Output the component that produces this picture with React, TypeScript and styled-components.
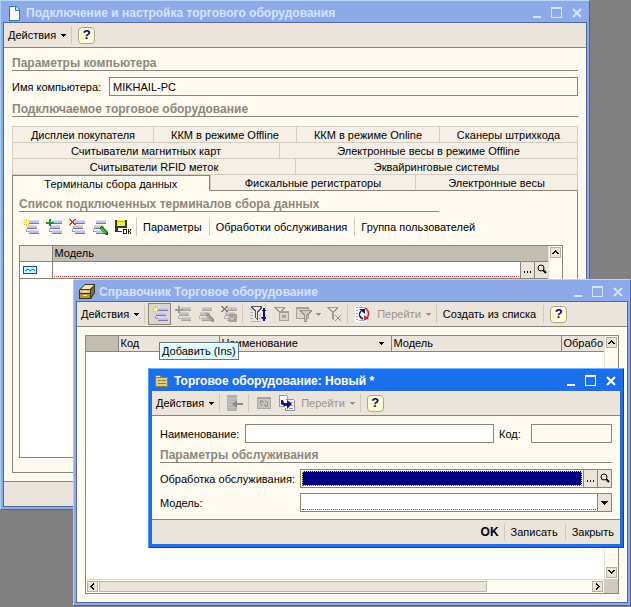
import React, { useState } from "react";
import styled, { createGlobalStyle, css } from "styled-components";

const c = {
  face: "#ebe4da",
  cream: "#fffbf0",
  line: "#8a8577",
  head: "#c3bcb0",
  soft: "#d3cdc0",
  caption: "#8c887b",
  disabled: "#99958b",
};

const GlobalStyle = createGlobalStyle`
  *, *::before, *::after { box-sizing: border-box; }
  body {
    margin: 0;
    background: #808080;
    color: #000;
    font: 11px/14px "Liberation Sans", Arial, sans-serif;
  }
  button, input, select { font: inherit; color: inherit; margin: 0; border-radius: 0; }
`;

const Desktop = styled.main`
  position: relative;
  min-height: 100vh;
  overflow: hidden;
`;

/* ---------- window frame ---------- */

const Frame = styled.section<{ $active?: boolean; $inset: string }>`
  position: absolute;
  inset: ${(p) => p.$inset};
  display: flex;
  flex-direction: column;
  padding: 0 2px 2px 2px;
  background: ${(p) => (p.$active ? "#1c6fec" : "#8faae9")};
  border: 1px solid ${(p) => (p.$active ? "#0a3fc0" : "#4a63a8")};
  border-top-color: ${(p) => (p.$active ? "#6fb4ff" : "#b4d8fa")};
  border-left-color: ${(p) => (p.$active ? "#4c9bff" : "#a5d0f5")};
`;

const TitleBar = styled.header<{ $active?: boolean }>`
  display: flex;
  align-items: center;
  flex: none;
  height: 21px;
  padding: 2px 2px 0 3px;
  gap: 4px;
  color: ${(p) => (p.$active ? "#fff" : "#d3e3ff")};

  h1 {
    flex: 1;
    margin: 0;
    font-size: 12px;
    line-height: 14px;
    font-weight: bold;
    white-space: nowrap;
    overflow: hidden;
  }
`;

const WindowButton = styled.button`
  flex: none;
  width: 16px;
  height: 16px;
  padding: 0;
  border: 0;
  background: none;
  color: inherit;
  display: grid;
  place-items: center;
`;

const Client = styled.div<{ $active?: boolean }>`
  flex: 1;
  min-height: 0;
  display: flex;
  flex-direction: column;
  border: 1px solid ${(p) => (p.$active ? "#2f68d0" : "#53679c")};
  background: ${c.cream};
`;

const Toolbar = styled.div<{ $plain?: boolean }>`
  display: flex;
  align-items: center;
  flex: none;
  height: ${(p) => (p.$plain ? "26px" : "25px")};
  padding: 0 1px;
  ${(p) =>
    !p.$plain &&
    css`
      background: ${c.face};
      border-bottom: 1px solid ${c.line};
    `}
`;

const ListTools = styled(Toolbar)`
  padding: 0;
  margin: 2px 0 5px;
`;

const Separator = styled.span`
  flex: none;
  width: 1px;
  height: 18px;
  margin: 0 3px 0 2px;
  background: #cfc9bc;
`;

const TextButton = styled.button<{ $strong?: boolean; $loose?: boolean }>`
  flex: none;
  display: flex;
  align-items: center;
  gap: 5px;
  padding: 0 ${(p) => (p.$loose ? "5px" : "3px")} 0 3px;
  border: 0;
  background: none;
  white-space: nowrap;
  ${(p) => p.$strong && css`font-size: 12px; font-weight: bold;`}

  &:disabled { color: ${c.disabled}; }
`;

const IconButton = styled.button<{ $hot?: boolean; $narrow?: boolean }>`
  flex: none;
  display: grid;
  place-items: center;
  width: ${(p) => (p.$narrow ? "7px" : "23px")};
  height: 22px;
  padding: 0;
  border: 1px solid ${(p) => (p.$hot ? "#8a8577" : "transparent")};
  background: ${(p) => (p.$hot ? "#dcd6cc" : "none")};

  &:disabled { color: ${c.disabled}; }
`;

const Help = styled.button`
  flex: none;
  width: 17px;
  height: 17px;
  margin-left: 3px;
  padding: 0;
  border: 1px solid #a9a695;
  border-radius: 4px;
  background: #ffffd2;
  color: #000080;
  font-weight: bold;
  font-size: 13px;
  line-height: 14px;
`;

const Body = styled.div`
  flex: 1;
  min-height: 0;
  display: flex;
  flex-direction: column;
  padding: 8px;
`;

const Gap = styled.div<{ $small?: boolean }>`
  flex: none;
  height: ${(p) => (p.$small ? "5px" : "6px")};
`;

const Caption = styled.h2<{ $short?: boolean }>`
  flex: none;
  margin: 0;
  margin-right: ${(p) => (p.$short ? "124px" : "0")};
  border-bottom: 1px solid ${c.line};
  color: ${c.caption};
  font-size: 12px;
  line-height: 14px;
  font-weight: bold;
  white-space: nowrap;
`;

const StatusBar = styled.footer`
  display: flex;
  align-items: center;
  justify-content: flex-end;
  flex: none;
  height: 25px;
  padding: 0 3px;
  border-top: 1px solid ${c.line};
  background: ${c.face};
`;

/* ---------- fields ---------- */

const FormRow = styled.div<{ $label: number }>`
  display: grid;
  grid-template-columns: ${(p) => p.$label}px 1fr;
  align-items: center;
  white-space: nowrap;
`;

const NameRow = styled(FormRow)`
  grid-template-columns: ${(p) => p.$label}px 1fr 37px 81px;

  label:nth-of-type(2) { padding-left: 5px; }
`;

const TextInput = styled.input`
  width: 100%;
  min-width: 0;
  height: 19px;
  padding: 0 3px;
  border: 1px solid ${c.line};
  background: #fff;
  outline: none;

  &:read-only { background: ${c.cream}; }
`;

const Box = styled.div`
  display: flex;
  height: 19px;
  border: 1px solid ${c.line};
  background: #fff;
`;

const Required = styled.div`
  flex: 1;
  display: flex;
  min-width: 0;
  margin: 1px;
  border-bottom: 1px dotted #b02a2a;
`;

const BareInput = styled.input<{ $selected?: boolean }>`
  flex: 1;
  min-width: 0;
  padding: 0 2px;
  border: 0;
  outline: none;
  background: none;
  ${(p) =>
    p.$selected &&
    css`
      background: #000080;
      border: 1px dotted #d8d8a0;
      border-bottom: 0;
      color: #fff;
    `}
`;

const BareSelect = styled.select`
  flex: 1;
  min-width: 0;
  border: 0;
  outline: none;
  appearance: none;
  background: none;
`;

const FieldButton = styled.button`
  flex: none;
  display: grid;
  place-items: center;
  width: 14px;
  padding: 0;
  border: 0;
  border-left: 1px solid ${c.line};
  background: ${c.face};
`;

/* ---------- tabs ---------- */

const Tabs = styled.div`
  flex: none;
  margin-top: 9px;
  border-top: 1px solid ${c.soft};
`;

const TabRow = styled.div`
  display: flex;
  height: 16px;
`;

const Tab = styled.button<{ $w: number; $on?: boolean }>`
  flex: ${(p) => p.$w} 1 0;
  min-width: 0;
  padding: 1px 0 0;
  border: solid ${c.soft};
  border-width: 0 0 1px 1px;
  background: #f5efe5;
  line-height: 14px;
  white-space: nowrap;
  overflow: hidden;

  &:last-child { border-right-width: 1px; }

  ${TabRow}:last-child & { border-bottom-color: ${c.line}; }

  ${(p) =>
    p.$on &&
    css`
      ${TabRow}:last-child &&, && {
        padding: 0;
        border-color: ${c.line};
        border-width: 1px 1px 0 1px;
        background: ${c.cream};
      }
    `}
`;

const TabPanel = styled.div`
  flex: 1;
  min-height: 0;
  display: flex;
  flex-direction: column;
  padding: 6px 14px 14px 6px;
  border: 1px solid ${c.line};
  border-top: 0;
`;

/* ---------- tables ---------- */

const GridBox = styled.div`
  flex: 1;
  min-height: 0;
  display: grid;
  grid-template-columns: 1fr 14px;
  grid-template-rows: 1fr auto;
  border: 1px solid ${c.line};
  background: #fff;
`;

const Table = styled.table`
  width: 100%;
  border-collapse: collapse;
  table-layout: fixed;
  align-self: start;

  th, td {
    height: 15px;
    padding: 0 0 0 2px;
    border-right: 1px solid ${c.line};
    border-bottom: 1px solid ${c.line};
    font-weight: normal;
    text-align: left;
    white-space: nowrap;
    overflow: hidden;
  }
  th { background: ${c.face}; line-height: 14px; }
  td { height: 17px; padding: 0; }
  tr > :last-child { border-right: 0; }
`;

const HeadCell = styled.th<{ $dark?: boolean }>`
  ${(p) => p.$dark && css`&& { background: ${c.head}; }`}
`;

const Sorted = styled.span`
  display: flex;
  align-items: center;
  justify-content: space-between;
  padding-right: 7px;
`;

const CellEditor = styled.div`
  display: flex;
  height: 16px;
`;

const RowMark = styled.span`
  display: grid;
  padding-left: 3px;
`;

const VTrack = styled.div`
  display: flex;
  flex-direction: column;
  justify-content: space-between;
  padding: 1px;
  background: ${c.cream};
  border-left: 1px solid #e6e1d6;
`;

const HTrack = styled.div`
  display: flex;
  gap: 1px;
  padding: 1px;
  height: 14px;
  background: ${c.cream};
  border-top: 1px solid #e0dbd0;
`;

const Thumb = styled.span`
  flex: 389 1 0;
  background: ${c.face};
  border: 1px solid #bdb8ab;
`;

const Rest = styled.span`
  flex: 104 1 0;
`;

const Corner = styled.span`
  background: #d0cabf;
`;

const ScrollButton = styled.button`
  flex: none;
  display: grid;
  place-items: center;
  width: 11px;
  height: 11px;
  padding: 0;
  border: 1px solid #b5b0a3;
  background: ${c.face};
`;

const Hint = styled.div`
  position: absolute;
  left: 159px;
  top: 342px;
  padding: 1px 2px;
  border: 1px solid #6c7a7a;
  background: #e1ffff;
  white-space: nowrap;
`;

/* ---------- icons ---------- */

const Svg = ({ w = 16, h = 16, children }: { w?: number; h?: number; children: React.ReactNode }) => (
  <svg width={w} height={h} viewBox={`0 0 ${w} ${h}`} shapeRendering="crispEdges" aria-hidden="true">
    {children}
  </svg>
);

const Down = () => (
  <Svg w={5} h={3}>
    <path d="M0 0h5v1H0zM1 1h3v1H1zM2 2h1v1H2z" fill="currentColor" />
  </Svg>
);

const Chevron = ({ dir }: { dir: "up" | "down" | "left" | "right" }) => {
  const d = {
    up: "M3 1h1v1H3zM2 2h3v1H2zM1 3h2v1H1zM4 3h2v1H4zM0 4h2v1H0zM5 4h2v1H5z",
    down: "M0 1h2v1H0zM5 1h2v1H5zM1 2h2v1H1zM4 2h2v1H4zM2 3h3v1H2zM3 4h1v1H3z",
    left: "M4 0h1v2H4zM3 1h1v2H3zM2 2h1v3H2zM1 3h1v1H1zM3 4h1v2H3zM4 5h1v2H4z",
    right: "M2 0h1v2H2zM3 1h1v2H3zM4 2h1v3H4zM5 3h1v1H5zM3 4h1v2H3zM2 5h1v2H2z",
  }[dir];
  return (
    <Svg w={7} h={7}>
      <path d={d} />
    </Svg>
  );
};

const Bars = ({ off }: { off?: boolean }) => (
  <>
    <path d="M6 1h10v4H6zM4 6h10v4H4zM6 11h10v4H6z" fill={off ? "#c0bcba" : "#bfc1ea"} />
    <path d="M6 1h10v1H6zM4 6h10v1H4zM6 11h10v1H6z" fill={off ? "#cfcbc8" : "#d9daf5"} />
    <path d="M6 4h10v1H6zM4 9h10v1H4zM6 14h10v1H6z" fill={off ? "#a5a2a4" : "#7778b0"} />
    <path d="M3 10h1v3H3zM3 12h3v1H3z" fill={off ? "#b5b1ae" : "#9a9cc8"} />
  </>
);

const AddIcon = () => (
  <Svg>
    <Bars />
    <path d="M3 0h1v7H3zM0 3h7v1H0zM1 1h1v1H1zM5 1h1v1H5zM1 5h1v1H1zM5 5h1v1H5z" fill="#ecc428" />
    <path d="M2 2h3v3H2z" fill="#fff27a" />
  </Svg>
);
const CopyIcon = ({ off }: { off?: boolean }) => (
  <Svg>
    <Bars off={off} />
    <path d="M3 0h2v7H3zM0 3h8v2H0z" fill={off ? "#9a9c94" : "#1c9a1c"} />
  </Svg>
);
const cross =
  "M0 0h2v1H0zM1 1h2v1H1zM2 2h3v2H2zM4 1h2v1H4zM5 0h2v1H5zM1 4h2v1H1zM4 4h2v1H4zM0 5h2v1H0zM5 5h2v1H5z";
const DeleteIcon = () => (
  <Svg>
    <Bars />
    <path d={cross} fill="#d23a20" />
  </Svg>
);
const EditIcon = ({ off }: { off?: boolean }) => (
  <Svg>
    <g transform="translate(-2 0)"><Bars off={off} /></g>
    <path d="M8 7h2l6 6v3h-2L8 10z" fill={off ? "#8f928a" : "#0c5a1c"} shapeRendering="auto" />
    <path d="M9 9l5 5" stroke={off ? "#a3a69c" : "#30d030"} strokeWidth="2" shapeRendering="auto" />
    <path d="M7 6h2v2H7z" fill={off ? "#b5b2aa" : "#f0d890"} />
  </Svg>
);
const MarkIcon = () => (
  <Svg>
    <Bars off />
    <path d={cross} fill="#8b7a6e" />
    <path d="M8 8h8v8H8z" fill="#a6a48c" />
    <path d="M9 11h1v2H9zM10 12h2v2h-2zM12 11h1v2h-1zM13 10h1v1h-1z" fill="#c6c4b0" />
  </Svg>
);
const SaveIcon = () => (
  <Svg>
    <path d="M0 1h12v12H0z" fill="#333a2c" />
    <path d="M2 1h8v6H2z" fill="#f2ee3a" />
    <path d="M2 2h8v1H2z" fill="#c8c020" />
    <path d="M3 9h4v3H3z" fill="#fff" />
    <path d="M7 9h9v7H7z" fill={c.cream} />
    <path d="M8 10h4v1H8zM8 11h1v3H8zM11 11h1v3h-1zM8 14h4v1H8zM13 10h1v5h-1zM15 10h1v2h-1zM14 12h1v1h-1zM15 13h1v2h-1z" fill="#222" />
  </Svg>
);
const SortFilterIcon = () => (
  <Svg>
    <path d="M0 3h2v1H0zM0 6h3v1H0zM0 9h3v1H0zM0 12h3v1H0zM0 15h11v1H0zM9 9h2v1H9zM9 12h2v1H9z" fill="#a8b6d6" />
    <path d="M1 0h11v2L8 6v8l-3-2V6L1 2z" fill="#555" />
    <path d="M3 1h7v1L7 5v7H6V5L3 2z" fill="#e6e6e6" />
    <path d="M13 2h2v9h-2zM12 4h4v1h-4zM11 11h5v1h-5zM12 12h4v1h-4zM13 13h2v2h-2z" fill="#12128a" />
  </Svg>
);
const Funnel = () => (
  <path d="M1 1h11v1l-4 5v8l-2-2V7L1 2zM3 2l4 4 3-4z" fill="#9d9a92" fillRule="evenodd" />
);
const FilterCurrentIcon = () => (
  <Svg>
    <Funnel />
    <path d="M6 5h10v10H6z" fill="#a5a29a" />
    <path d="M7 7h8v7H7z" fill="#d9d4ca" />
    <path d="M9 9h4v3H9z" fill="#aba79e" />
  </Svg>
);
const FilterHistoryIcon = () => (
  <Svg>
    <path d="M0 1h13v12H0z" fill="#a5a29a" />
    <path d="M1 3h11v9H1z" fill="#ddd8ce" />
    <path d="M3 4h13v1l-5 5v6H8v-6L3 5z" fill="#98958c" />
    <path d="M5 5h9l-4 4v6H9V9z" fill="#cfcbc1" />
  </Svg>
);
const FilterOffIcon = () => (
  <Svg>
    <Funnel />
    <path d="M9 9l6 6M15 9l-6 6" stroke="#96938b" fill="none" shapeRendering="auto" />
  </Svg>
);
const RefreshListIcon = () => (
  <Svg>
    <path d="M0 0h11v16H0z" fill="#fff" />
    <path d="M1 1h2v1H1zM1 4h2v1H1zM1 7h2v1H1zM1 10h2v1H1zM1 13h2v1H1zM4 1h6v1H4zM4 14h6v1H4z" fill="#8fa4cc" />
    <path d="M8 13Q2 10 6 5" fill="none" stroke="#15158a" strokeWidth="1.5" shapeRendering="auto" />
    <path d="M4 3h6v5z" fill="#15158a" shapeRendering="auto" />
    <path d="M10 2q6 4 2 10" fill="none" stroke="#c02828" strokeWidth="1.5" shapeRendering="auto" />
    <path d="M9 14V9l5 4z" fill="#c02828" shapeRendering="auto" />
  </Svg>
);
const ParentIcon = () => (
  <Svg>
    <path d="M0 0h10v16H0z" fill="#b5b3b2" />
    <path d="M1 3h8v1H1zM1 6h8v1H1zM1 9h8v1H1zM1 12h8v1H1z" fill="#c8c5c3" />
    <path d="M5 9l5-4v3h6v2h-6v3z" fill="#8c8a88" shapeRendering="auto" />
  </Svg>
);
const ReloadIcon = () => (
  <Svg>
    <path d="M1 2h14v12H1z" fill="#a9a7a2" />
    <path d="M2 4h12v9H2z" fill="#c6c3bd" />
    <path d="M6 11q-3-2-1-5M4 6h3v2M9 6q4 1 2 5M12 11H9V9" fill="none" stroke="#8b8984" shapeRendering="auto" />
  </Svg>
);
const GoIcon = () => (
  <Svg>
    <path d="M0 0h9v12H0zM8 4h8v12H6v-4z" fill="#fff" />
    <path d="M0 0h8v1H0zM0 1h1v10H0zM8 1h1v3H8zM0 11h6v1H0zM7 4h8v1H7zM15 5h1v11h-1zM6 15h9v1H6zM6 13h1v2H6zM10 7h4v1h-4zM12 10h2v1h-2zM10 13h4v1h-4z" fill="#8f97ac" />
    <path d="M2 5h2l1 3h3V5l5 4-5 5v-3H5L2 9z" fill="#14148f" shapeRendering="auto" />
  </Svg>
);
const RecordIcon = () => (
  <Svg w={15} h={10}>
    <path d="M0 1h14v8H0z" fill="#1b4f9e" />
    <path d="M1 2h12v6H1z" fill="#c9f4ff" />
    <path d="M2 6l3-2 2 2 3-2 2 2" fill="none" stroke="#1b6ea8" shapeRendering="auto" />
  </Svg>
);
const DotsIcon = () => (
  <Svg w={9} h={9}>
    <path d="M1 6h1v2H1zM4 6h1v2H4zM7 6h1v2H7z" />
  </Svg>
);
const LensIcon = () => (
  <Svg w={11} h={11}>
    <circle cx="5" cy="4" r="3" fill="none" stroke="#000" shapeRendering="auto" />
    <path d="M7 6l3 3" stroke="#000" strokeWidth="2" shapeRendering="auto" />
  </Svg>
);
const PageIcon = () => (
  <Svg>
    <path d="M3 1h7l4 4v11H3z" fill="#2f7f98" />
    <path d="M4 2h5v4h4v9H4z" fill="#fff" />
    <path d="M10 2l3 3h-3z" fill="#b8e4f4" />
  </Svg>
);
const CabinetIcon = () => (
  <Svg>
    <path d="M0 6l6-6h10v9l-4 6H0z" fill="#3a3424" shapeRendering="auto" />
    <path d="M2 5l4-4h9l-4 4z" fill="#f4e6b0" shapeRendering="auto" />
    <path d="M1 6h10v3H1z" fill="#e0c070" />
    <path d="M1 10h10v4H1z" fill="#b8903c" />
    <path d="M12 6l3-4v7l-3 4z" fill="#8a6a2a" shapeRendering="auto" />
    <path d="M4 7h4v1H4zM4 11h4v1H4z" fill="#fff6d0" />
  </Svg>
);
const FolderIcon = () => (
  <Svg>
    <path d="M1 2h6l1 2h6v10H1z" fill="#8b8438" />
    <path d="M2 5h11v8H2z" fill="#d8cf80" />
    <path d="M2 3h4v1H2z" fill="#f5efb0" />
    <path d="M4 7h3v1H4zM8 7h4v1H8zM4 10h8v1H4z" fill="#8b8438" />
  </Svg>
);

const WindowButtons = () => (
  <>
    <WindowButton aria-label="Свернуть">
      <Svg w={12} h={12}><path d="M2 9h8v2H2z" fill="currentColor" /></Svg>
    </WindowButton>
    <WindowButton aria-label="Развернуть">
      <Svg w={12} h={12}><path d="M0 0h11v11H0zM1 2v8h9V2z" fillRule="evenodd" fill="currentColor" /></Svg>
    </WindowButton>
    <WindowButton aria-label="Закрыть окно">
      <Svg w={12} h={12}><path d="M2 2l8 8M10 2l-8 8" stroke="currentColor" strokeWidth="2" shapeRendering="auto" /></Svg>
    </WindowButton>
  </>
);

const tabRows: [string, number][][] = [
  [["Дисплеи покупателя", 141], ["ККМ в режиме Offline", 143], ["ККМ в режиме Online", 143], ["Сканеры штрихкода", 138]],
  [["Считыватели магнитных карт", 267], ["Электронные весы в режиме Offline", 298]],
  [["Считыватели RFID меток", 283], ["Эквайринговые системы", 282]],
  [["Терминалы сбора данных", 197], ["Фискальные регистраторы", 206], ["Электронные весы", 162]],
];

export default function App() {
  const [tab, setTab] = useState("Терминалы сбора данных");
  return (
    <>
      <GlobalStyle />
      <Desktop>
        <Frame $inset="0 41px 97px 0">
          <TitleBar>
            <PageIcon />
            <h1>Подключение и настройка торгового оборудования</h1>
            <WindowButtons />
          </TitleBar>
          <Client>
            <Toolbar>
              <TextButton>Действия <Down /></TextButton>
              <Separator />
              <Help aria-label="Справка">?</Help>
            </Toolbar>
            <Body>
              <Caption>Параметры компьютера</Caption>
              <Gap />
              <FormRow $label={97}>
                <label htmlFor="pc">Имя компьютера:</label>
                <TextInput id="pc" defaultValue="MIKHAIL-PC" readOnly />
              </FormRow>
              <Gap />
              <Caption>Подключаемое торговое оборудование</Caption>
              <Tabs role="tablist">
                {tabRows.map((row, i) => (
                  <TabRow key={i}>
                    {row.map(([name, w]) => (
                      <Tab key={name} role="tab" aria-selected={tab === name} $w={w} $on={tab === name} onClick={() => setTab(name)}>
                        {name}
                      </Tab>
                    ))}
                  </TabRow>
                ))}
              </Tabs>
              <TabPanel role="tabpanel">
                <Caption $short>Список подключенных терминалов сбора данных</Caption>
                <ListTools $plain>
                  <IconButton aria-label="Добавить"><AddIcon /></IconButton>
                  <IconButton aria-label="Скопировать"><CopyIcon /></IconButton>
                  <IconButton aria-label="Удалить"><DeleteIcon /></IconButton>
                  <IconButton aria-label="Изменить"><EditIcon /></IconButton>
                  <IconButton aria-label="Сохранить"><SaveIcon /></IconButton>
                  <Separator />
                  <TextButton $loose>Параметры</TextButton>
                  <Separator />
                  <TextButton $loose>Обработки обслуживания</TextButton>
                  <Separator />
                  <TextButton>Группа пользователей</TextButton>
                </ListTools>
                <GridBox>
                  <Table>
                    <colgroup><col width="32" /><col /></colgroup>
                    <thead>
                      <tr><HeadCell /><HeadCell $dark>Модель</HeadCell></tr>
                    </thead>
                    <tbody>
                      <tr>
                        <td><RowMark><RecordIcon /></RowMark></td>
                        <td>
                          <CellEditor>
                            <Required><BareInput aria-label="Модель терминала" /></Required>
                            <FieldButton aria-label="Выбрать модель"><DotsIcon /></FieldButton>
                            <FieldButton aria-label="Открыть модель"><LensIcon /></FieldButton>
                          </CellEditor>
                        </td>
                      </tr>
                    </tbody>
                  </Table>
                  <VTrack>
                    <ScrollButton aria-label="Вверх"><Chevron dir="up" /></ScrollButton>
                  </VTrack>
                </GridBox>
              </TabPanel>
            </Body>
            <StatusBar />
          </Client>
        </Frame>

        <Frame $inset="279px 0 1px 73px">
          <TitleBar>
            <CabinetIcon />
            <h1>Справочник Торговое оборудование</h1>
            <WindowButtons />
          </TitleBar>
          <Client>
            <Toolbar>
              <TextButton>Действия <Down /></TextButton>
              <Separator />
              <IconButton $hot aria-label="Добавить элемент"><AddIcon /></IconButton>
              <IconButton disabled aria-label="Скопировать элемент"><CopyIcon off /></IconButton>
              <IconButton disabled aria-label="Изменить элемент"><EditIcon off /></IconButton>
              <IconButton disabled aria-label="Пометить на удаление"><MarkIcon /></IconButton>
              <Separator />
              <IconButton aria-label="Отбор и сортировка"><SortFilterIcon /></IconButton>
              <IconButton disabled aria-label="Отбор по текущему"><FilterCurrentIcon /></IconButton>
              <IconButton disabled aria-label="История отборов"><FilterHistoryIcon /></IconButton>
              <IconButton $narrow disabled aria-label="Список отборов"><Down /></IconButton>
              <IconButton disabled aria-label="Отключить отбор"><FilterOffIcon /></IconButton>
              <Separator />
              <IconButton aria-label="Обновить"><RefreshListIcon /></IconButton>
              <TextButton disabled>Перейти <Down /></TextButton>
              <Separator />
              <TextButton $loose>Создать из списка</TextButton>
              <Separator />
              <Help aria-label="Справка по справочнику">?</Help>
            </Toolbar>
            <Body>
              <GridBox>
                <Table>
                  <colgroup><col width="32" /><col width="101" /><col width="172" /><col width="170" /><col /></colgroup>
                  <thead>
                    <tr>
                      <HeadCell $dark />
                      <HeadCell>Код</HeadCell>
                      <HeadCell><Sorted>Наименование <Down /></Sorted></HeadCell>
                      <HeadCell>Модель</HeadCell>
                      <HeadCell>Обрабо</HeadCell>
                    </tr>
                  </thead>
                </Table>
                <VTrack>
                  <ScrollButton aria-label="Вверх по списку"><Chevron dir="up" /></ScrollButton>
                  <ScrollButton aria-label="Вниз по списку"><Chevron dir="down" /></ScrollButton>
                </VTrack>
                <HTrack>
                  <ScrollButton aria-label="Влево"><Chevron dir="left" /></ScrollButton>
                  <Thumb />
                  <Rest />
                  <ScrollButton aria-label="Вправо"><Chevron dir="right" /></ScrollButton>
                </HTrack>
                <Corner />
              </GridBox>
            </Body>
          </Client>
        </Frame>

        <Hint role="tooltip">Добавить (Ins)</Hint>

        <Frame $active $inset="368px 7px 59px 148px">
          <TitleBar $active>
            <FolderIcon />
            <h1>Торговое оборудование: Новый *</h1>
            <WindowButtons />
          </TitleBar>
          <Client $active>
            <Toolbar>
              <TextButton>Действия <Down /></TextButton>
              <Separator />
              <IconButton disabled aria-label="Перейти к родителю"><ParentIcon /></IconButton>
              <Separator />
              <IconButton disabled aria-label="Перечитать"><ReloadIcon /></IconButton>
              <IconButton aria-label="Переход"><GoIcon /></IconButton>
              <TextButton disabled>Перейти <Down /></TextButton>
              <Separator />
              <Help aria-label="Справка по элементу">?</Help>
            </Toolbar>
            <Body>
              <NameRow $label={85}>
                <label htmlFor="name">Наименование:</label>
                <TextInput id="name" />
                <label htmlFor="code">Код:</label>
                <TextInput id="code" readOnly />
              </NameRow>
              <Gap $small />
              <Caption>Параметры обслуживания</Caption>
              <Gap />
              <FormRow $label={140}>
                <label htmlFor="proc">Обработка обслуживания:</label>
                <Box>
                  <Required><BareInput id="proc" $selected /></Required>
                  <FieldButton aria-label="Выбрать обработку"><DotsIcon /></FieldButton>
                  <FieldButton aria-label="Открыть обработку"><LensIcon /></FieldButton>
                </Box>
              </FormRow>
              <Gap $small />
              <FormRow $label={140}>
                <label htmlFor="model">Модель:</label>
                <Box>
                  <Required><BareSelect id="model"><option></option></BareSelect></Required>
                  <FieldButton aria-label="Раскрыть список"><Svg w={7} h={4}><path d="M0 0h7v1H0zM1 1h5v1H1zM2 2h3v1H2zM3 3h1v1H3z" /></Svg></FieldButton>
                </Box>
              </FormRow>
            </Body>
            <StatusBar>
              <TextButton $strong>OK</TextButton>
              <Separator />
              <TextButton $loose>Записать</TextButton>
              <Separator />
              <TextButton>Закрыть</TextButton>
            </StatusBar>
          </Client>
        </Frame>
      </Desktop>
    </>
  );
}
